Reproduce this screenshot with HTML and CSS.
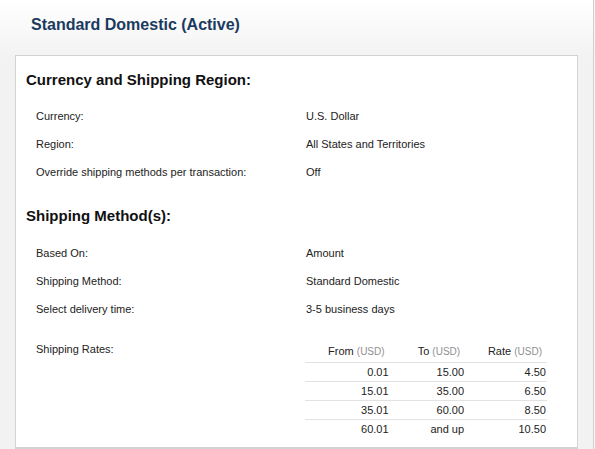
FILE: index.html
```html
<!DOCTYPE html>
<html lang="en">
<head>
<meta charset="utf-8">
<title>Standard Domestic (Active)</title>
<link rel="stylesheet" href="styles.css">
</head>
<body>
<div class="page">
  <header class="page-head">
    <h1 class="page-title">Standard Domestic (Active)</h1>
  </header>
  <section class="card">
    <h2 class="section-title">Currency and Shipping Region:</h2>
    <dl class="fields">
      <div class="field"><dt>Currency:</dt><dd>U.S. Dollar</dd></div>
      <div class="field"><dt>Region:</dt><dd>All States and Territories</dd></div>
      <div class="field"><dt>Override shipping methods per transaction:</dt><dd>Off</dd></div>
    </dl>

    <h2 class="section-title section-title--next">Shipping Method(s):</h2>
    <dl class="fields">
      <div class="field"><dt>Based On:</dt><dd>Amount</dd></div>
      <div class="field"><dt>Shipping Method:</dt><dd>Standard Domestic</dd></div>
      <div class="field"><dt>Select delivery time:</dt><dd>3-5 business days</dd></div>
    </dl>

    <div class="rates">
      <div class="rates-label">Shipping Rates:</div>
      <table class="rate-table">
        <thead>
          <tr>
            <th class="col-from">From <span class="unit">(USD)</span></th>
            <th class="col-to">To <span class="unit">(USD)</span></th>
            <th class="col-rate">Rate <span class="unit">(USD)</span></th>
          </tr>
        </thead>
        <tbody>
          <tr><td>0.01</td><td>15.00</td><td>4.50</td></tr>
          <tr><td>15.01</td><td>35.00</td><td>6.50</td></tr>
          <tr><td>35.01</td><td>60.00</td><td>8.50</td></tr>
          <tr><td>60.01</td><td>and up</td><td>10.50</td></tr>
        </tbody>
      </table>
    </div>
  </section>
</div>
</body>
</html>
```

FILE: styles.css
```css
html, body {
  margin: 0;
  padding: 0;
}

body {
  background: #f7f7f7;
  font-family: "Liberation Sans", Arial, sans-serif;
  color: #222;
  height: 449px;
  overflow: hidden;
}

.page {
  width: 593px;
  height: 449px;
  border-right: 1px solid #cfcfcf;
  background: linear-gradient(to bottom, #ffffff 0, #f2f2f2 60px, #f2f2f2 100%);
}

.page-head {
  height: 55px;
  padding-left: 31px;
  box-sizing: border-box;
}

.page-title {
  margin: 0;
  padding-top: 15px;
  font-size: 16px;
  line-height: 20px;
  font-weight: bold;
  color: #1b3a60;
}

.card {
  margin-left: 15px;
  width: 561px;
  height: 377px;
  background: #fff;
  border: 1px solid #d2d2d2;
  border-bottom-width: 2px;
  padding-top: 14px;
  box-sizing: content-box;
}

.section-title {
  margin: 0 0 12px 10px;
  font-size: 15px;
  line-height: 20px;
  font-weight: bold;
  color: #111;
}

.section-title--next {
  margin-top: 20px;
  margin-bottom: 13px;
}

.fields {
  margin: 0;
}

.field {
  display: flex;
  height: 28px;
  align-items: center;
  font-size: 11px;
  line-height: 14px;
}

.field dt {
  width: 270px;
  padding-left: 20px;
  color: #222;
}

.field dd {
  margin: 0;
  color: #222;
}

.rates {
  display: flex;
  margin-top: 17px;
  font-size: 11px;
  line-height: 14px;
}

.rates-label {
  width: 270px;
  padding-left: 20px;
  padding-top: 2px;
}

.rate-table {
  width: 242px;
  border-collapse: collapse;
  margin-left: -1px;
  font-size: 11px;
}

.rate-table th {
  font-weight: normal;
  text-align: right;
  padding: 5px 5px 4px 0;
  line-height: 13px;
  border-bottom: 1px solid #e2e2e2;
  color: #222;
}

.rate-table td {
  text-align: right;
  padding: 3px 1px 3px 0;
  line-height: 12px;
  border-bottom: 1px solid #e2e2e2;
}

.rate-table tbody tr:last-child td {
  border-bottom: none;
}

.col-from { width: 85px; }
.col-to { width: 75px; }
.col-rate { width: 82px; }

.unit {
  font-size: 10px;
  color: #8f8f8f;
}
```
